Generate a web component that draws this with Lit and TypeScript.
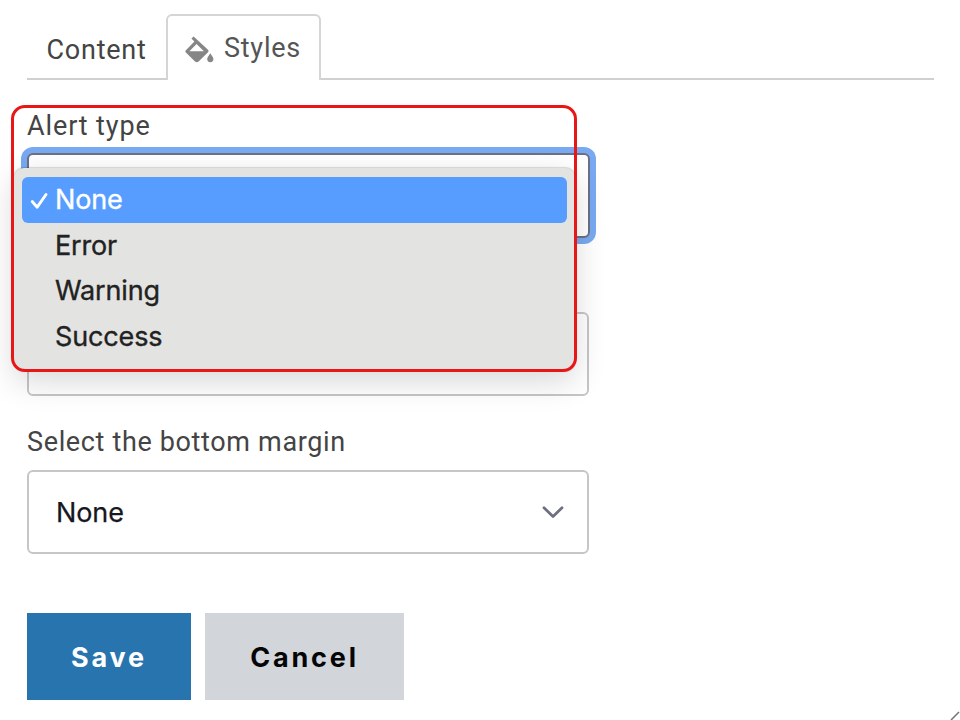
import { LitElement, html, css, svg } from "lit";
import { customElement, property } from "lit/decorators.js";
import { classMap } from "lit/directives/class-map.js";

@customElement("select-box")
class SelectBox extends LitElement {
  @property() value = "";
  @property({ type: Boolean, reflect: true }) focused = false;

  static styles = css`
    :host {
      display: flex;
      align-items: center;
      justify-content: space-between;
      box-sizing: border-box;
      width: 562px;
      height: 84px;
      padding: 0 22px 0 28px;
      border: 2px solid #c6c6c8;
      border-radius: 6px;
      background: #fff;
      font: 27px/34px Inter, sans-serif;
      color: #17171f;
    }
    :host([focused]) {
      height: 85px;
      width: 563px;
      border-color: #6c7085;
      box-shadow: 0 0 0 6px #78a9f1;
    }
    span {
      margin: 1px 0 0 -1px;
      letter-spacing: -0.1px;
      -webkit-text-stroke: 0.25px currentColor;
    }
    svg {
      display: block;
    }
  `;

  render() {
    return html`<span>${this.value}</span>
      ${this.value
        ? html`<svg width="24" height="16" viewBox="0 0 24 16" fill="none" stroke="#6d6f82" stroke-width="2.8" stroke-linecap="round" stroke-linejoin="round">
            <path d="M3 3.8 12 12.6 21 3.8" />
          </svg>`
        : ""}`;
  }
}

@customElement("option-menu")
class OptionMenu extends LitElement {
  @property({ attribute: false }) options: string[] = [];
  @property() selected = "";

  static styles = css`
    :host {
      display: block;
      box-sizing: border-box;
      padding: 9px 8px 10px;
      border-radius: 10px;
      background: #e3e3e1;
      box-shadow: 0 0 1px 1px rgba(0, 0, 0, 0.14), 0 10px 32px rgba(0, 0, 0, 0.16);
      font: 27px/44px Inter, sans-serif;
      color: #222;
    }
    .option {
      display: flex;
      align-items: center;
      height: 45.7px;
      border-radius: 6px;
      letter-spacing: -0.15px;
      -webkit-text-stroke: 0.35px currentColor;
    }
    .selected {
      background: #569dff;
      color: #fff;
    }
    .mark {
      display: flex;
      width: 33px;
      padding-top: 3px;
      box-sizing: border-box;
      justify-content: center;
    }
  `;

  render() {
    return this.options.map(
      (o) => html`<div class=${classMap({ option: true, selected: o === this.selected })}>
        <span class="mark">
          ${o === this.selected
            ? html`<svg width="20" height="20" viewBox="0 0 20 20" fill="none" stroke="#fff" stroke-width="2.9" stroke-linecap="round" stroke-linejoin="round">
                <path d="M3.2 10.5 8.2 16.2 17 3.5" />
              </svg>`
            : ""}
        </span>
        <span>${o}</span>
      </div>`
    );
  }
}

const bucket = svg`
  <path fill="#868686" fill-rule="evenodd" d="M8.6 0.4 6.4 2.6 9.4 5.6 0.9 14.2Q-0.1 15.4 0.9 16.6L10 25.6Q11.8 27.1 13.6 25.6L23 16.2Q24 15 23 13.8ZM11.6 8 18.9 15.2H4.4Z" />
  <path fill="#868686" d="M25.3 17.2C23.8 19.6 22.2 21.4 22.2 23.1A3.1 3.1 0 0 0 28.4 23.1C28.4 21.4 26.8 19.6 25.3 17.2Z" />`;

@customElement("app-root")
class AppRoot extends LitElement {
  static styles = css`
    :host {
      display: block;
      position: relative;
      box-sizing: border-box;
      width: 960px;
      height: 720px;
      padding: 14px 26px 0 27px;
      overflow: hidden;
      background: #fff;
      font: 27px/34px Roboto, sans-serif;
      color: #444;
      letter-spacing: 0.75px;
    }
    .tabs {
      display: flex;
      height: 66px;
    }
    .tab {
      box-sizing: border-box;
      height: 65.5px;
      border-bottom: 2px solid #d0d0d0;
      width: 139px;
      padding: 19px 0 0 19.5px;
    }
    .active {
      display: flex;
      gap: 9px;
      width: 155px;
      padding: 15px 0 0 17px;
      border: 2px solid #d5d5d5;
      border-bottom: 0;
      border-radius: 6px 6px 0 0;
      color: #555;
    }
    .active svg {
      margin-top: 5px;
    }
    .rest {
      flex: 1;
      box-sizing: border-box;
      height: 65.5px;
      border-bottom: 2px solid #d0d0d0;
    }
    .fields {
      display: flex;
      flex-direction: column;
      padding-top: 28px;
    }
    .field {
      height: 158px;
    }
    .field:first-child {
      height: 159px;
    }
    .label {
      height: 45px;
    }
    .short {
      box-sizing: border-box;
      padding-top: 1px;
      letter-spacing: 0.88px;
    }
    .long {
      letter-spacing: 0.65px;
    }
    .buttons {
      display: flex;
      gap: 14px;
      margin-top: 30px;
    }
    .button {
      box-sizing: border-box;
      height: 87px;
      border: 0;
      padding: 2px 0 0;
      font: 700 27px/34px Inter, sans-serif;
      letter-spacing: 2.8px;
      text-align: center;
    }
    .save {
      width: 164px;
      background: #2774ae;
      color: #fff;
    }
    .cancel {
      width: 199px;
      background: #d2d5da;
      color: #050505;
    }
    option-menu {
      position: absolute;
      left: 14px;
      top: 168px;
      width: 561px;
      height: 203px;
      letter-spacing: 0;
    }
    .outline {
      position: absolute;
      left: 11px;
      top: 105px;
      width: 566px;
      height: 267px;
      box-sizing: border-box;
      border: 3px solid #e81616;
      border-radius: 14px;
    }
    select-box {
      letter-spacing: 0;
    }
    .grip {
      position: absolute;
      right: 0;
      bottom: 0;
    }
  `;

  render() {
    return html`
      <div class="tabs">
        <div class="tab">Content</div>
        <div class="tab active">
          <svg width="30" height="28" viewBox="0 0 30 28">${bucket}</svg>
          <span>Styles</span>
        </div>
        <div class="rest"></div>
      </div>
      <div class="fields">
        <div class="field">
          <div class="label short">Alert type</div>
          <select-box focused></select-box>
        </div>
        <div class="field">
          <div class="label"></div>
          <select-box></select-box>
        </div>
        <div class="field">
          <div class="label long">Select the bottom margin</div>
          <select-box value="None"></select-box>
        </div>
      </div>
      <div class="buttons">
        <button class="button save">Save</button>
        <button class="button cancel">Cancel</button>
      </div>
      <option-menu .options=${["None", "Error", "Warning", "Success"]} selected="None"></option-menu>
      <div class="outline"></div>
      <svg class="grip" width="10" height="9" viewBox="0 0 10 9" stroke="#777" stroke-width="1.6"><path d="M1 9 9 1" /></svg>
    `;
  }
}
